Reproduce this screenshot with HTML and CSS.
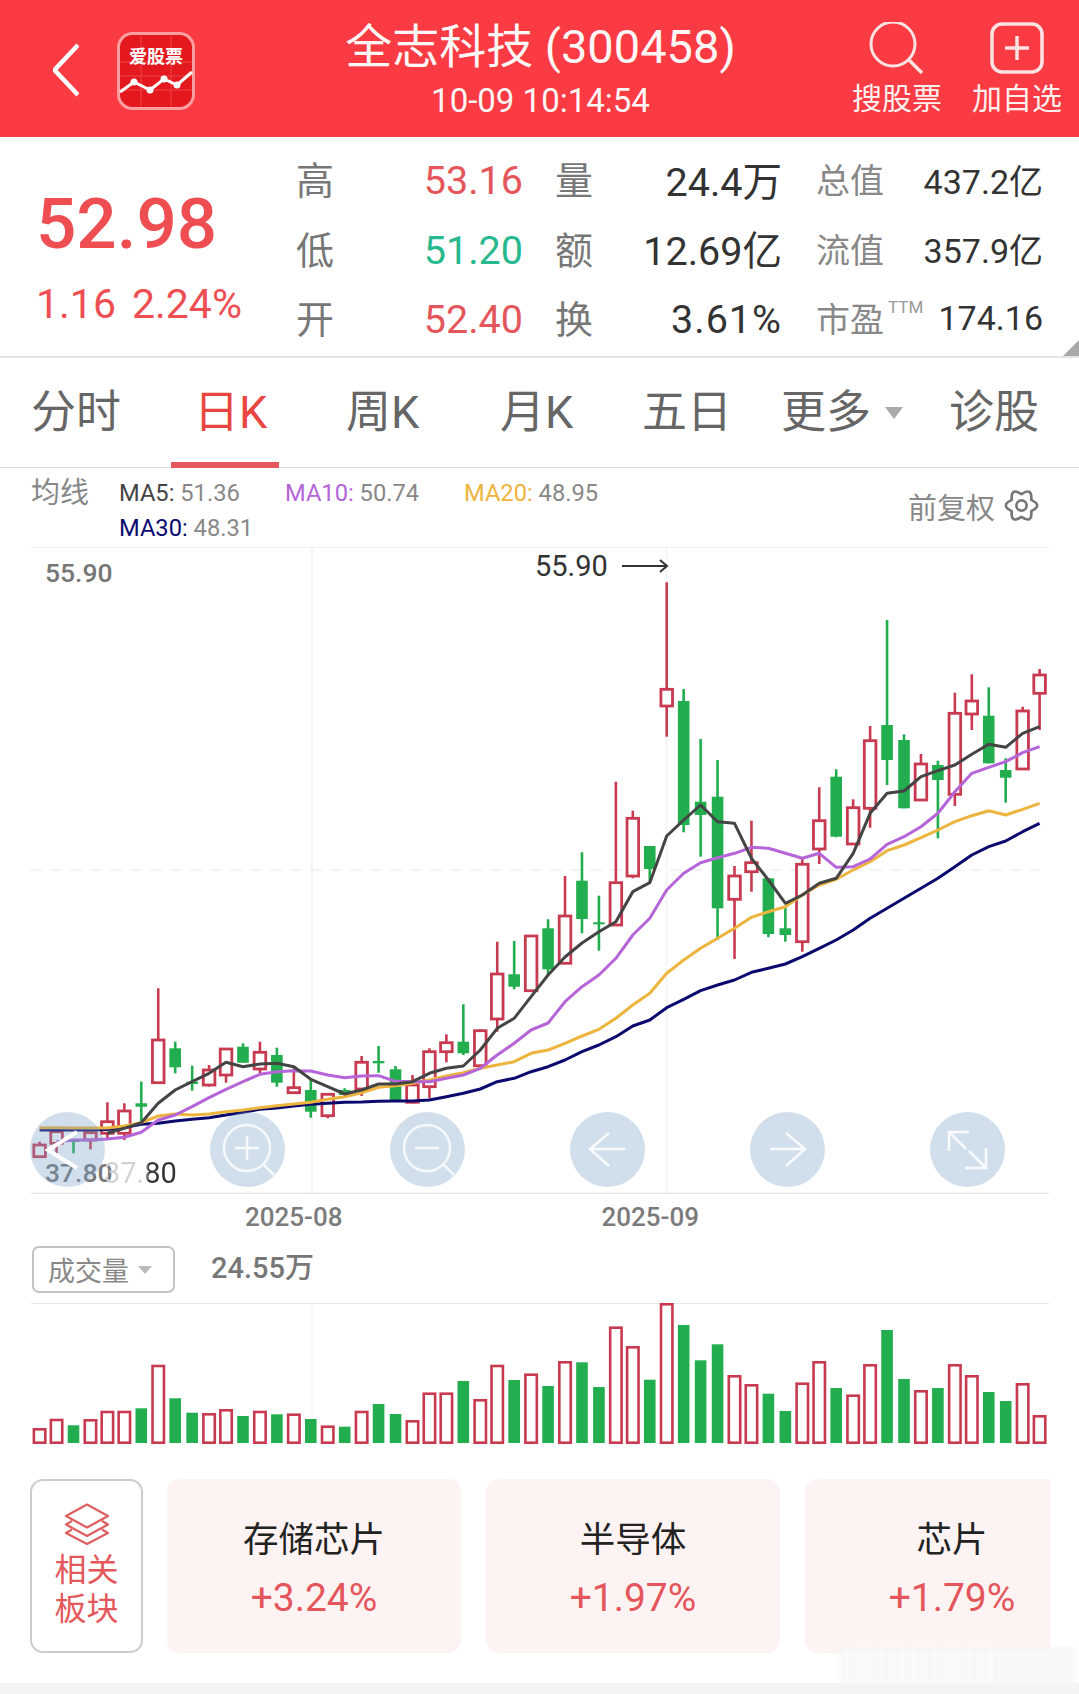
FILE: index.html
```html
<!DOCTYPE html>
<html lang="zh-CN">
<head>
    <meta charset="utf-8">
    <title>全志科技 (300458)</title>
    <link rel="stylesheet" href="styles.css">
    <script src="chart.js" defer></script>
</head>
<body>
    <header class="topbar">
        <svg class="back" width="26" height="54" viewBox="0 0 26 54"><path d="M25 2 L1.500 27 L25 52" fill="none" stroke="#fff" stroke-width="4.500"/></svg>
        <svg class="logo" width="78" height="78" viewBox="0 0 78 78">
            <rect x="1.500" y="1.500" width="75" height="75" rx="14" fill="#e3191f" stroke="#ff9e9e" stroke-width="3"/>
            <path d="M3 30H75M3 44H75M3 58H75M24 4V74M54 4V74" stroke="#f0474a" stroke-width="1"/>
            <text x="39" y="31" text-anchor="middle" class="logo-text">爱股票</text>
            <polyline points="3,60 17,50 33,58 47,47 60,53 75,40" fill="none" stroke="#fff" stroke-width="3"/>
            <circle cx="17" cy="50" r="3.500" fill="#fff"/>
            <circle cx="33" cy="58" r="3.500" fill="#fff"/>
            <circle cx="47" cy="47" r="3.500" fill="#fff"/>
            <circle cx="60" cy="53" r="3.500" fill="#fff"/>
        </svg>
        <div class="title-box">
            <div class="title">全志科技 (300458)</div>
            <div class="time">10-09 10:14:54</div>
        </div>
        <div class="action">
            <svg width="56" height="52" viewBox="0 0 56 52"><circle cx="24" cy="22" r="22" fill="none" stroke="#ffe3e3" stroke-width="3"/><path d="M40 38 L53 51" stroke="#ffe3e3" stroke-width="3.500"/></svg>
            <span>搜股票</span>
        </div>
        <div class="action">
            <svg width="54" height="52" viewBox="0 0 54 52"><rect x="2" y="2" width="50" height="48" rx="10" fill="none" stroke="#ffe3e3" stroke-width="3.500"/><path d="M27 14V38M15 26H39" stroke="#ffe3e3" stroke-width="3.500"/></svg>
            <span>加自选</span>
        </div>
    </header>

    <section class="quote">
        <div class="price-box">
            <div class="price">52.98</div>
            <div class="change"><span>1.16</span><span>2.24%</span></div>
        </div>
        <div class="stats">
            <div class="lab">高</div><div class="num red">53.16</div>
            <div class="lab">量</div><div class="num dark cjk">24.4万</div>
            <div class="lab2">总值</div><div class="num2">437.2亿</div>

            <div class="lab">低</div><div class="num green">51.20</div>
            <div class="lab">额</div><div class="num dark cjk">12.69亿</div>
            <div class="lab2">流值</div><div class="num2">357.9亿</div>

            <div class="lab">开</div><div class="num red">52.40</div>
            <div class="lab">换</div><div class="num dark wide">3.61%</div>
            <div class="lab2">市盈</div><div class="num2 ttm-row"><span class="ttm">TTM</span><span>174.16</span></div>
        </div>
        <div class="corner"></div>
    </section>

    <nav class="tabs">
        <div class="tab">分时</div>
        <div class="tab active">日K</div>
        <div class="tab">周K</div>
        <div class="tab">月K</div>
        <div class="tab">五日</div>
        <div class="tab more">更多<i class="tri"></i></div>
        <div class="tab">诊股</div>
    </nav>

    <section class="legend">
        <div class="legend-title">均线</div>
        <div class="ma-grid">
            <div><span class="c5">MA5:</span> 51.36</div>
            <div><span class="c10">MA10:</span> 50.74</div>
            <div><span class="c20">MA20:</span> 48.95</div>
            <div><span class="c30">MA30:</span> 48.31</div>
        </div>
        <div class="adjust">
            前复权
            <svg width="35" height="35" viewBox="-1 -1 34 34"><path d="M25.500 21.500 Q37 16 25.500 10.500 Q26.500 -2.200 16 5 Q5.500 -2.200 6.500 10.500 Q-5 16 6.500 21.500 Q5.500 34.200 16 27 Q26.500 34.200 25.500 21.500 Z" fill="none" stroke="#777" stroke-width="2.600" stroke-linejoin="round"/><circle cx="16" cy="16" r="5" fill="none" stroke="#777" stroke-width="2.600"/></svg>
        </div>
    </section>

    <section class="kline">
        <svg id="klineSvg" width="1079" height="647" viewBox="0 547 1079 647"></svg>
        <div class="high-left">55.90</div>
        <div class="high-mark">55.90
            <svg width="47" height="16" viewBox="0 0 47 16"><path d="M0 8H45M38 2L45 8L38 14" fill="none" stroke="#333" stroke-width="2"/></svg>
        </div>
        <div class="low-left">37.80</div>
        <div class="low-mark">37.80</div>
        <div class="zoom-btns">
            <div class="zoom-btn"><svg width="75" height="75" viewBox="0 0 75 75"><path d="M47 20 L18 38 L47 56" fill="none" stroke="#fff" stroke-width="4"/></svg></div>
            <div class="zoom-btn"><svg width="75" height="75" viewBox="0 0 75 75"><circle cx="37" cy="36" r="23" fill="none" stroke="#fff" stroke-opacity=".8" stroke-width="2.500"/><path d="M25 36H49M37 24V48M54 53L64 63" fill="none" stroke="#fff" stroke-opacity=".8" stroke-width="2.500"/></svg></div>
            <div class="zoom-btn"><svg width="75" height="75" viewBox="0 0 75 75"><circle cx="37" cy="36" r="23" fill="none" stroke="#fff" stroke-opacity=".8" stroke-width="2.500"/><path d="M25 36H49M54 53L64 63" fill="none" stroke="#fff" stroke-opacity=".8" stroke-width="2.500"/></svg></div>
            <div class="zoom-btn"><svg width="75" height="75" viewBox="0 0 75 75"><path d="M20 37H55M39 21L20 37L39 54" fill="none" stroke="#fff" stroke-opacity=".85" stroke-width="2.500"/></svg></div>
            <div class="zoom-btn"><svg width="75" height="75" viewBox="0 0 75 75"><path d="M20 37H55M36 21L55 37L36 54" fill="none" stroke="#fff" stroke-opacity=".85" stroke-width="2.500"/></svg></div>
            <div class="zoom-btn"><svg width="75" height="75" viewBox="0 0 75 75"><path d="M39 20H19V39M19 20L36 37M39 39L56 56M35 56H56V36" fill="none" stroke="#fff" stroke-opacity=".85" stroke-width="2.500"/></svg></div>
        </div>
    </section>

    <div class="axis"><span>2025-08</span><span>2025-09</span></div>

    <div class="vol-head">
        <div class="vol-select">成交量<i class="tri small"></i></div>
        <div class="vol-value">24.55万</div>
    </div>
    <svg id="volSvg" class="vol-chart" width="1079" height="141" viewBox="0 1303 1079 141"></svg>

    <section class="blocks">
        <div class="block-tag">
            <svg width="46" height="42" viewBox="0 0 46 42"><path d="M23 1.500 L44 13 L23 24.500 L2 13 Z M8 18 L2 21.500 L23 33 L44 21.500 L38 18 M8 26.500 L2 30 L23 41 L44 30 L38 26.500" fill="none" stroke="#dd5f60" stroke-width="2.200" stroke-linejoin="round"/></svg>
            <div>相关<br>板块</div>
        </div>
        <div class="card"><div class="card-name">存储芯片</div><div class="card-pct">+3.24%</div></div>
        <div class="card"><div class="card-name">半导体</div><div class="card-pct">+1.97%</div></div>
        <div class="card"><div class="card-name">芯片</div><div class="card-pct">+1.79%</div></div>
    </section>

    <div class="mark"></div>
    <div class="bottom-strip"></div>
</body>
</html>
```

FILE: styles.css
```css
* {
    box-sizing: border-box;
}

body {
    margin: 0;
    width: 1079px;
    height: 1694px;
    overflow: hidden;
    position: relative;
    background: #fff;
    font-family: Roboto, "Noto Sans CJK SC", sans-serif;
}

svg {
    display: block;
    flex-shrink: 0;
}

/* top red bar */
.topbar {
    display: flex;
    height: 137px;
    background: #fb3b43;
    padding-left: 53px;
    color: #fff;
}
.back {
    margin-top: 43px;
    margin-right: 38px;
}
.logo {
    margin-top: 32px;
}
.logo-text {
    font-size: 18px;
    font-weight: 700;
    fill: #fff;
}
.title-box {
    flex: 0 0 623px;
    margin-left: 34px;
    padding-top: 17px;
    text-align: center;
    color: #fff6f6;
}
.title {
    font-size: 47px;
    line-height: 60px;
}
.time {
    font-size: 33px;
    line-height: 40px;
    margin-top: 4px;
}
.action {
    flex: 0 0 90px;
    padding-top: 22px;
    display: flex;
    flex-direction: column;
    align-items: center;
}
.action + .action {
    margin-left: 30px;
}
.action span {
    font-size: 30px;
    line-height: 34px;
    margin-top: 8px;
    color: #fff0f0;
}

/* quote block */
.quote {
    display: flex;
    position: relative;
    height: 221px;
    border-bottom: 2px solid #e4e4e4;
}
.price-box {
    width: 296px;
    padding: 47px 0 0 36px;
    color: #ee4e52;
}
.price {
    font-size: 71px;
    line-height: 80px;
    font-weight: 500;
}
.change {
    display: flex;
    gap: 16px;
    margin-top: 18px;
    font-size: 41px;
    line-height: 44px;
}
.stats {
    display: grid;
    grid-template-columns: 38px 189px 70px 189px 102px 159px;
    grid-auto-rows: 69.5px;
    align-items: center;
    margin-top: 9px;
    height: 209px;
}
.lab {
    font-size: 38px;
    color: #777;
    text-align: right;
    margin-bottom: 6px;
}
.lab2 {
    font-size: 34px;
    color: #888;
    text-align: right;
    margin-bottom: 4px;
}
.num {
    font-size: 39.500px;
    text-align: right;
}
.num.cjk {
    margin-bottom: 5px;
}
.num.wide {
    letter-spacing: 1px;
}
.num2 {
    font-size: 34px;
    color: #333;
    text-align: right;
    margin-bottom: 3px;
}
.red {
    color: #e4565b;
}
.green {
    color: #27b88e;
}
.dark {
    color: #333;
}
.ttm-row {
    display: flex;
    justify-content: space-between;
    padding-left: 4px;
}
.ttm {
    font-size: 17px;
    color: #999;
    line-height: 22px;
    margin-top: -2px;
}
.corner {
    position: absolute;
    right: 0;
    bottom: 0;
    border-style: solid;
    border-width: 0 0 16px 16px;
    border-color: transparent transparent #a9a9a9 transparent;
}

/* period tabs */
.tabs {
    display: grid;
    grid-template-columns: 163px 152px 154px 142px 139px 168px auto;
    align-items: center;
    height: 110px;
    padding-left: 31px;
    border-bottom: 1px solid #ddd;
}
.tab {
    position: relative;
    font-size: 45px;
    color: #666;
    line-height: 54px;
}
.tab.active {
    color: #e8463f;
}
.tab.active::after {
    content: "";
    position: absolute;
    left: -23px;
    bottom: -28px;
    width: 108px;
    height: 6px;
    background: #e5575c;
}
.more {
    display: flex;
    align-items: center;
}
.tri {
    display: inline-block;
    width: 0;
    height: 0;
    margin-left: 14px;
    border-style: solid;
    border-width: 12px 9px 0 9px;
    border-color: #aaa transparent transparent transparent;
}
.tri.small {
    margin-left: 9px;
    border-width: 8px 7px 0 7px;
    border-color: #bbb transparent transparent transparent;
}

/* moving average legend */
.legend {
    display: flex;
    height: 79px;
    padding: 8px 40px 0 31px;
    color: #888;
}
.legend-title {
    width: 88px;
    font-size: 29px;
    line-height: 34px;
}
.ma-grid {
    display: grid;
    grid-template-columns: 166px 179px 180px;
    grid-auto-rows: 35px;
    font-size: 23.700px;
    line-height: 35px;
}
.c5 {
    color: #444;
}
.c10 {
    color: #b565d8;
}
.c20 {
    color: #edb43e;
}
.c30 {
    color: #0a0a6e;
}
.adjust {
    display: flex;
    align-items: center;
    gap: 9px;
    margin-left: auto;
    margin-top: 12px;
    height: 35px;
    font-size: 29px;
    color: #888;
}

/* candlestick chart */
.kline {
    position: relative;
    height: 647px;
}
.high-left,
.low-left {
    position: absolute;
    left: 45px;
    font-size: 26.500px;
    font-weight: 500;
    line-height: 32px;
    color: #777;
}
.high-left {
    top: 10px;
}
.low-left {
    top: 610px;
}
.high-mark {
    position: absolute;
    left: 535px;
    top: 1px;
    display: flex;
    align-items: center;
    gap: 14px;
    font-size: 29px;
    line-height: 36px;
    color: #333;
}
.low-mark {
    position: absolute;
    left: 104px;
    top: 608px;
    font-size: 29px;
    line-height: 36px;
    background: linear-gradient(to right, #d0d0d0 0, #d4d4d4 55%, #333 62%);
    -webkit-background-clip: text;
    background-clip: text;
    color: transparent;
}
.zoom-btns {
    position: absolute;
    left: 30px;
    top: 565px;
    width: 975px;
    display: flex;
    justify-content: space-between;
}
.zoom-btn {
    width: 75px;
    height: 75px;
    border-radius: 50%;
    background: rgba(120, 160, 200, .34);
}

/* date axis */
.axis {
    display: flex;
    gap: 259px;
    height: 46px;
    padding-left: 245px;
    margin-bottom: 6px;
    font-size: 26px;
    font-weight: 500;
    line-height: 46px;
    color: #7b7b7b;
}

/* volume */
.vol-head {
    display: flex;
    align-items: flex-start;
    height: 46px;
    padding-left: 32px;
}
.vol-select {
    display: flex;
    align-items: center;
    width: 143px;
    height: 47px;
    padding-left: 14px;
    border: 2px solid #c2c2c2;
    border-radius: 7px;
    font-size: 27px;
    color: #888;
}
.vol-value {
    margin-left: 36px;
    font-size: 29px;
    font-weight: 500;
    line-height: 44px;
    color: #777;
}
.vol-chart {
    margin-top: 11px;
}

/* related blocks */
.blocks {
    display: flex;
    gap: 25px;
    width: 1050px;
    height: 174px;
    margin-top: 35px;
    padding-left: 30px;
    overflow: hidden;
}
.block-tag {
    flex: 0 0 113px;
    margin-right: -1px;
    border: 2px solid #ccc;
    border-radius: 13px;
    padding-top: 22px;
    display: flex;
    flex-direction: column;
    align-items: center;
    font-size: 32px;
    line-height: 39px;
    text-align: center;
    color: #e4585c;
}
.block-tag div {
    margin-top: 6px;
}
.card {
    flex: 0 0 294px;
    border-radius: 13px;
    background: #fef3f3;
    text-align: center;
    padding-top: 37px;
}
.card-name {
    font-size: 35.500px;
    line-height: 48px;
    color: #222;
}
.card-pct {
    margin-top: 10px;
    font-size: 39px;
    line-height: 48px;
    color: #e4565b;
}

/* faint picture watermark at the bottom right */
.mark {
    position: absolute;
    left: 840px;
    top: 1648px;
    width: 235px;
    height: 36px;
    background:
        repeating-linear-gradient(to bottom, rgba(225, 225, 225, .3) 0 3px, rgba(255, 255, 255, 0) 3px 8px) right / 75px 100% no-repeat,
        repeating-linear-gradient(to right, rgba(232, 232, 232, .3) 0 4px, rgba(255, 255, 255, 0) 4px 11px) left / 160px 100% no-repeat,
        rgba(250, 250, 250, .8);
    filter: blur(2px);
}
.bottom-strip {
    position: absolute;
    left: 0;
    right: 0;
    bottom: 0;
    height: 11px;
    background: #f4f4f4;
}
```

FILE: chart.js
```js
// x of the first candle and distance between candles
const X0 = 39.6;
const STEP = 1000 / 59;
const RED = '#c83a50';
const GREEN = '#22ad4e';

// [up, high, body top, body bottom, low], values are pixels on the page
const candles = [
    [1, 1141.7, 1145, 1156.7, 1156.7], [1, 1131.7, 1131.7, 1143.3, 1153.3], [0, 1140, 1140, 1142, 1153.3], [1, 1131.7, 1132.7, 1140, 1149.3],
    [1, 1102.3, 1121.7, 1133.3, 1138.3], [1, 1103.3, 1111, 1133.3, 1140], [0, 1081.7, 1103.3, 1106.7, 1121.7], [1, 988.3, 1040, 1082.7, 1082.7],
    [0, 1041.7, 1048.3, 1067.3, 1073.3], [0, 1065.7, 1081.7, 1084, 1090.7], [1, 1065, 1070, 1085, 1086.7], [1, 1049, 1049, 1075, 1082.7],
    [0, 1043.3, 1046.7, 1062.7, 1062.7], [1, 1041.7, 1052.3, 1069, 1073.3], [0, 1047.7, 1055, 1082.7, 1086.7], [1, 1068.3, 1087.7, 1092.7, 1092.7],
    [0, 1080, 1090, 1111.7, 1117.7], [1, 1094.3, 1094.3, 1115.7, 1118.3], [0, 1088.3, 1090, 1095, 1095], [1, 1056, 1062.3, 1089, 1096],
    [0, 1046, 1061, 1063.3, 1072.7], [0, 1066, 1069.3, 1100, 1100], [1, 1075, 1085, 1102.3, 1103.3], [1, 1048.3, 1051.7, 1086.7, 1098.3],
    [1, 1034.3, 1042.7, 1051.7, 1062.3], [0, 1004.3, 1041.7, 1053.3, 1055], [1, 1029.3, 1030.7, 1065.7, 1065.7], [1, 941.7, 974, 1019, 1031.7],
    [0, 941, 974.3, 986.7, 989.3], [1, 936, 936, 990.7, 990.7], [0, 919.3, 928.3, 969.3, 974.3], [1, 876, 916, 963.3, 963.3],
    [0, 852.3, 880.7, 919, 933.3], [0, 895.7, 922.3, 924.3, 950.7], [1, 781.7, 882.7, 925, 925], [1, 810.7, 818.3, 876, 878.3],
    [0, 846, 846, 869, 881.7], [1, 582.3, 689.3, 706, 736.7], [0, 689, 701, 825, 832.3], [0, 739, 801.7, 815, 856.7],
    [0, 760, 796.7, 908.3, 940], [1, 866, 876, 899.3, 959], [1, 820.7, 862.7, 871.7, 891.7], [0, 878.3, 878.3, 934, 937.3],
    [0, 906.7, 928.3, 935, 941.7], [1, 858.3, 864.3, 941.7, 951.7], [1, 787.3, 820.7, 849, 864], [0, 769.3, 776.7, 836.7, 837.3],
    [1, 799.3, 807.7, 844, 844], [1, 726, 740.7, 808.3, 827.7], [0, 620, 725, 760, 785], [0, 734.3, 740, 808.3, 808.3],
    [1, 754, 764, 800, 800], [0, 760.7, 765, 780, 838.3], [1, 692.7, 713.3, 794.3, 806], [1, 674.3, 701, 714, 730],
    [0, 687.3, 715.7, 763.3, 763.3], [0, 758.3, 770, 777.7, 802.7], [1, 706.7, 711, 769, 769.3], [1, 669, 675, 693.3, 730]
];

// moving averages, null where the line has not started yet
const ma5 = [null, null, null, null, 1133.3, 1128.3, 1122.7, 1103.3, 1090, 1081.7, 1073.3, 1062.3, 1066.7, 1064, 1063.3, 1066.7, 1079.3, 1086.7, 1094, 1090,
    1084, 1084, 1081.7, 1073.3, 1068.3, 1066, 1050, 1028.3, 1018.3, 996.7, 975, 957, 943, 931.7, 921.7, 891.7, 882.7, 836, 820, 805,
    821.7, 823.3, 858.3, 880, 903.3, 895, 883.3, 878.3, 853.3, 813.3, 793.3, 791, 776.7, 770.7, 765, 754.3, 744.3, 747.3, 733.3, 726.7];
const ma10 = [null, 1141.7, 1140, 1140, 1139, 1137.3, 1132.3, 1120, 1115, 1106.7, 1097.7, 1089.3, 1081.7, 1074.3, 1071.7, 1070.7, 1071, 1075, 1077.7, 1076,
    1075.7, 1081.3, 1081.7, 1081.7, 1078.3, 1075, 1068.3, 1055, 1043.3, 1030, 1023, 1001.7, 986.7, 975, 958.3, 935, 918.3, 890, 873.3, 862.7,
    857.7, 853.3, 847.3, 848.3, 853.3, 858.3, 853.3, 867.3, 866.7, 859, 844.3, 836.7, 826.7, 813.3, 791.7, 773.3, 767.3, 761.7, 752.7, 746.7];
const ma20 = [1127.7, 1127.7, 1128, 1128, 1128, 1126, 1122.7, 1116, 1114, 1115, 1114, 1111.7, 1110, 1107.7, 1105.7, 1104, 1102.3, 1099.3, 1096.7, 1092.7,
    1087.3, 1085.7, 1083.3, 1080, 1076, 1072.7, 1068.3, 1065, 1061.7, 1053.3, 1050, 1043.3, 1036, 1029.3, 1018.3, 1005, 993.3, 973.3, 960, 948.3,
    938.3, 928.3, 917.3, 911.7, 906.7, 895, 885, 879.3, 870, 861.7, 850.7, 845, 837.7, 830, 821.7, 815.7, 810.7, 815, 809.3, 803.3];
const ma30 = [1130, 1130, 1130, 1130, 1129.5, 1127.5, 1124.3, 1123.3, 1121, 1119.3, 1117.7, 1115, 1112.3, 1109.3, 1108, 1106, 1104.3, 1103.3, 1102.3, 1102,
    1101.3, 1101, 1101, 1100, 1096.7, 1093.3, 1089, 1081.7, 1078.3, 1071.7, 1066.7, 1060, 1051.7, 1045, 1036.7, 1026, 1020, 1007.7, 999.3, 990.7,
    985, 980, 972.3, 968.3, 964, 956.7, 948.3, 940, 930, 918.3, 908.3, 898.3, 888.3, 878.3, 866.7, 855, 846.7, 841, 831.7, 823.3];

// top of each volume bar
const vols = [1428.3, 1419, 1425.3, 1419.3, 1411, 1411, 1408.3, 1365, 1398.3, 1412.7, 1413.3, 1409.3, 1416, 1411, 1414.3, 1413.7, 1419, 1425.7, 1426.7, 1411,
    1404, 1414, 1420.3, 1392.7, 1392.7, 1381, 1399.3, 1365, 1380, 1373.7, 1386, 1361.3, 1362.3, 1387, 1326.7, 1346.3, 1379.7, 1303.3, 1325, 1360.3,
    1344.3, 1375.3, 1384.3, 1393.7, 1411, 1382.7, 1361.3, 1388, 1394.7, 1364.3, 1330, 1379, 1390.3, 1388, 1364.3, 1375.3, 1392, 1401, 1383.3, 1415.3];

function xOf(i) {
    return X0 + STEP * i;
}

function line(x1, y1, x2, y2, color, width, extra) {
    return `<line x1="${x1}" y1="${y1}" x2="${x2}" y2="${y2}" stroke="${color}" stroke-width="${width}" ${extra || ''}/>`;
}

function bar(x, top, bottom, up) {
    if (up) {
        return `<rect x="${x - 5.8}" y="${top}" width="11.6" height="${bottom - top}" fill="#fff" stroke="${RED}" stroke-width="2.800"/>`;
    }
    return `<rect x="${x - 5.8}" y="${top}" width="11.6" height="${bottom - top}" fill="${GREEN}"/>`;
}

function maLine(values, color) {
    const pts = [];
    values.forEach((v, i) => {
        if (v !== null) pts.push(xOf(i).toFixed(1) + ',' + v);
    });
    return `<polyline points="${pts.join(' ')}" fill="none" stroke="${color}" stroke-width="3" stroke-linejoin="round"/>`;
}

function drawKline() {
    let s = '';
    // grid
    s += line(31, 547.5, 1049, 547.5, '#eee', 1);
    s += line(31, 1193.5, 1049, 1193.5, '#e4e4e4', 1.5);
    s += line(30, 870, 1040, 870, '#f0f0f0', 1.5, 'stroke-dasharray="12 8"');
    s += line(312, 547, 312, 1193, '#f2f2f2', 1.5);
    s += line(666.5, 547, 666.5, 1193, '#f2f2f2', 1.5);

    candles.forEach((c, i) => {
        const x = xOf(i);
        const color = c[0] ? RED : GREEN;
        s += line(x, c[1], x, c[4], color, 2.6);
        s += bar(x, c[2], c[3], c[0]);
    });

    s += maLine(ma30, '#0a0a6e');
    s += maLine(ma20, '#edb43e');
    s += maLine(ma10, '#b565d8');
    s += maLine(ma5, '#444');
    document.getElementById('klineSvg').innerHTML = s;
}

function drawVolume() {
    let s = '';
    s += line(31, 1303.5, 1049, 1303.5, '#e8e8e8', 1);
    s += line(312, 1303, 312, 1443, '#f4f4f4', 1);
    vols.forEach((top, i) => {
        const x = xOf(i);
        if (candles[i][0]) {
            s += `<rect x="${x - 5.7}" y="${top + 1}" width="11.4" height="${1441.7 - top}" fill="#fff" stroke="${RED}" stroke-width="2.600"/>`;
        } else {
            s += `<rect x="${x - 5.8}" y="${top}" width="11.6" height="${1443 - top}" fill="${GREEN}"/>`;
        }
    });
    document.getElementById('volSvg').innerHTML = s;
}

document.addEventListener('DOMContentLoaded', () => {
    drawKline();
    drawVolume();
});
```
